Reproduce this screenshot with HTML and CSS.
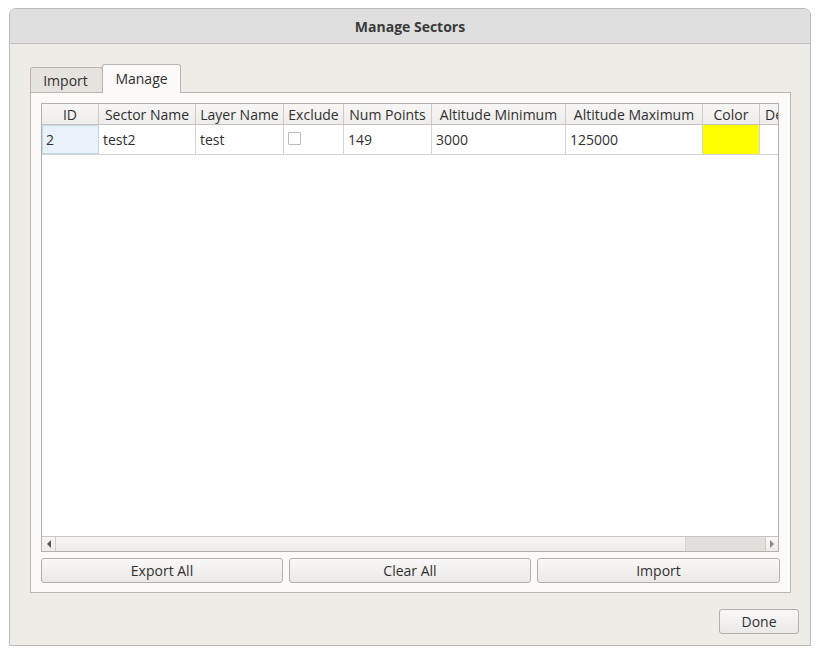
FILE: index.html
```html
<!DOCTYPE html>
<html>
<head>
<meta charset="utf-8">
<link rel="stylesheet" href="styles.css">
</head>
<body>
<div class="window">
  <div class="titlebar">Manage Sectors</div>
  <div class="content">
    <div class="tabs">
      <div class="tab">Import</div>
      <div class="tab active">Manage</div>
    </div>
    <div class="pane">
      <div class="table">
        <div class="thead">
          <div class="c w1">ID</div>
          <div class="c w2">Sector Name</div>
          <div class="c w3">Layer Name</div>
          <div class="c w4">Exclude</div>
          <div class="c w5">Num Points</div>
          <div class="c w6">Altitude Minimum</div>
          <div class="c w7">Altitude Maximum</div>
          <div class="c w8">Color</div>
          <div class="c w9">Description</div>
        </div>
        <div class="row">
          <div class="c w1 sel">2</div>
          <div class="c w2">test2</div>
          <div class="c w3">test</div>
          <div class="c w4"><span class="check"></span></div>
          <div class="c w5">149</div>
          <div class="c w6">3000</div>
          <div class="c w7">125000</div>
          <div class="c w8 yellow"></div>
          <div class="c w9"></div>
        </div>
        <div class="fill"></div>
        <div class="hscroll">
          <div class="arrow left"><span class="tri-l"></span></div>
          <div class="track"><div class="handle"></div></div>
          <div class="arrow right"><span class="tri-r"></span></div>
        </div>
      </div>
      <div class="buttons">
        <div class="btn">Export All</div>
        <div class="btn">Clear All</div>
        <div class="btn">Import</div>
      </div>
    </div>
    <div class="footer">
      <div class="btn done">Done</div>
    </div>
  </div>
</div>
</body>
</html>
```

FILE: styles.css
```css
* { box-sizing: border-box; }
html, body { margin: 0; padding: 0; background: #ffffff; }
body {
  font-family: "Open Sans", "Noto Sans", sans-serif;
  font-size: 14px;
  color: #303030;
}
.window {
  margin: 8px 0 0 9px;
  width: 802px;
  height: 638px;
  border: 1px solid #bdbab7;
  border-radius: 7px 7px 0 0;
  display: flex;
  flex-direction: column;
  overflow: hidden;
  background: #efebe7;
}
.titlebar {
  height: 35px;
  flex: none;
  background: #dfdfdf;
  border-bottom: 1px solid #c2c0be;
  display: flex;
  align-items: center;
  justify-content: center;
  font-weight: bold;
  font-size: 14px;
  color: #3a3a3a;
  padding-top: 1px;
}
.content {
  flex: 1;
  display: flex;
  flex-direction: column;
  padding: 20px 19px 0 20px;
}
.tabs {
  display: flex;
  align-items: flex-end;
  height: 28px;
  flex: none;
}
.tab {
  height: 25px;
  border: 1px solid #bab5b0;
  border-bottom: none;
  border-radius: 3px 3px 0 0;
  background: #e6e2de;
  display: flex;
  align-items: center;
  width: 73px;
  justify-content: center;
  padding-right: 2px;
}
.tab.active {
  width: 79px;
  margin-left: -1px;
  background: #fcfaf8;
  position: relative;
  z-index: 1;
  margin-bottom: -1px;
  height: 29px;
  padding: 0 0 2px 0;
}
.pane {
  height: 501px;
  flex: none;
  border: 1px solid #bab5b0;
  background: #fcfaf8;
  padding: 10px 11px 9px 10px;
  display: flex;
  flex-direction: column;
}
.table {
  height: 449px;
  flex: none;
  border: 1px solid #b4afaa;
  background: #ffffff;
  display: flex;
  flex-direction: column;
  overflow: hidden;
}
.thead, .row {
  display: flex;
  flex: none;
  white-space: nowrap;
}
.thead {
  height: 21px;
  background: linear-gradient(#f7f6f5, #efedeb);
  border-bottom: 1px solid #c8c4c0;
}
.thead .c {
  justify-content: center;
  border-right: 1px solid #cfcbc7;
}
.row {
  height: 30px;
  border-bottom: 1px solid #d4d4d4;
}
.row .c {
  border-right: 1px solid #d4d4d4;
  padding-left: 4px;
}
.c {
  flex: none;
  display: flex;
  align-items: center;
  overflow: hidden;
}
.w1 { width: 57px; }
.w2 { width: 97px; }
.w3 { width: 88px; }
.w4 { width: 60px; }
.w5 { width: 88px; }
.w6 { width: 134px; }
.w7 { width: 137px; }
.w8 { width: 57px; }
.w9 { width: 100px; }
.thead .w9 { justify-content: flex-start; padding-left: 5px; }
.row .sel {
  background: #e7f2fa;
  border: 1px solid #c3d7e6;
  padding-left: 3px;
}
.row .yellow { background: #ffff00; }
.check {
  width: 13px;
  height: 13px;
  border: 1px solid #bcbcbc;
  background: #fff;
  border-radius: 1px;
  margin-top: -2px;
}
.fill { flex: 1; }
.hscroll {
  height: 15px;
  flex: none;
  border-top: 1px solid #c9c5c1;
  display: flex;
  background: linear-gradient(#f7f6f5, #eeece9);
}
.arrow {
  width: 14px;
  flex: none;
  display: flex;
  align-items: center;
  justify-content: center;
}
.arrow.left { border-right: 1px solid #cfcbc7; }
.arrow.right { width: 13px; border-left: 1px solid #cfcbc7; }
.tri-l {
  width: 0; height: 0;
  border-top: 4px solid transparent;
  border-bottom: 4px solid transparent;
  border-right: 4px solid #555;
}
.tri-r {
  width: 0; height: 0;
  border-top: 4px solid transparent;
  border-bottom: 4px solid transparent;
  border-left: 4px solid #888;
}
.track {
  flex: 1;
  display: flex;
  justify-content: flex-end;
}
.handle {
  width: 80px;
  background: #e2dfdc;
  border-left: 1px solid #d6d2ce;
}
.buttons {
  margin-top: 6px;
  display: grid;
  grid-template-columns: 242px 242px 243px;
  column-gap: 6px;
  height: 25px;
  margin-right: -1px;
}
.btn {
  height: 25px;
  border: 1px solid #b3afab;
  border-radius: 3px;
  background: linear-gradient(#f9f8f7, #ebe9e7);
  display: flex;
  align-items: center;
  justify-content: center;
  color: #303030;
}
.footer {
  display: flex;
  justify-content: flex-end;
  padding-top: 16px;
  margin-right: -8px;
}
.done { width: 80px; }
```
